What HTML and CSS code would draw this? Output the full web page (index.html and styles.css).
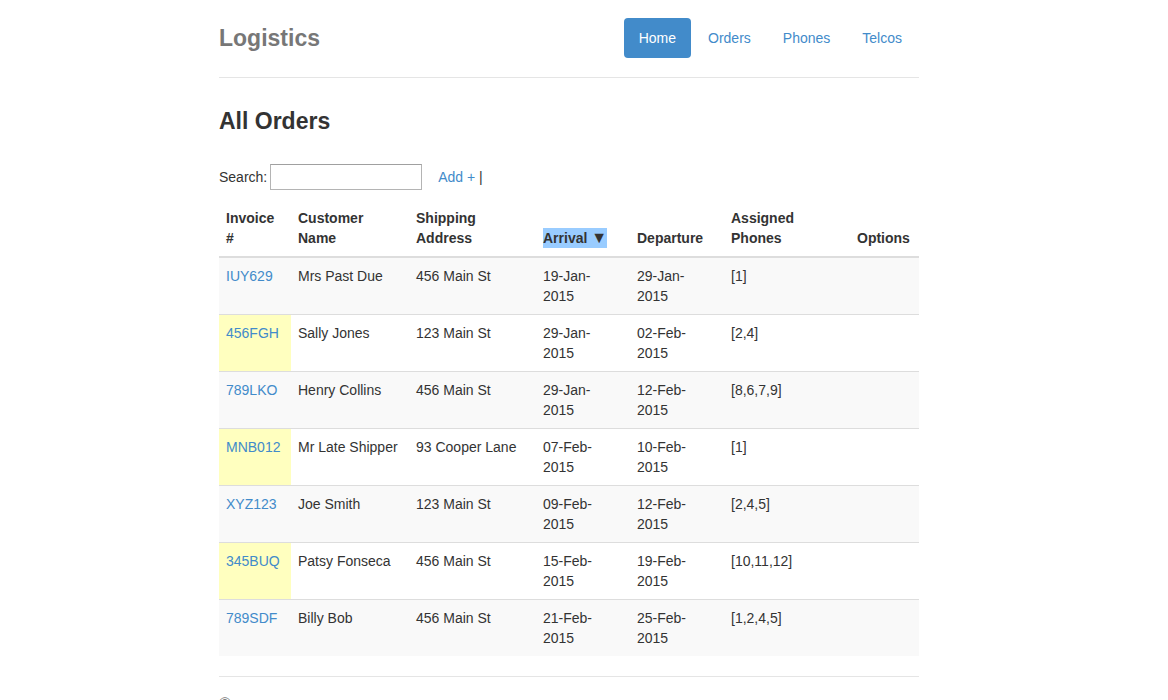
FILE: index.html
```html
<!DOCTYPE html>
<html lang="en">
<head>
<meta charset="utf-8">
<title>Logistics</title>
<link rel="stylesheet" href="styles.css">
</head>
<body>
<div class="container">
  <header class="header">
    <h3 class="brand">Logistics</h3>
    <nav class="nav">
      <a class="nav-link active" href="#">Home</a>
      <a class="nav-link" href="#">Orders</a>
      <a class="nav-link" href="#">Phones</a>
      <a class="nav-link" href="#">Telcos</a>
    </nav>
  </header>
  <main>
    <h1 class="title">All Orders</h1>
    <div class="toolbar">
      <label for="search">Search:</label>
      <input class="search" id="search" type="text">
      <span class="actions"><a href="#">Add +</a> |</span>
    </div>
    <table class="table">
      <colgroup>
        <col class="col-invoice"><col class="col-customer"><col class="col-address"><col class="col-date"><col class="col-date"><col class="col-phones"><col class="col-options">
      </colgroup>
      <thead>
        <tr><th>Invoice #</th><th>Customer<br>Name</th><th>Shipping<br>Address</th><th><span class="sorted">Arrival <span class="arrow">▼</span></span></th><th>Departure</th><th>Assigned<br>Phones</th><th>Options</th></tr>
      </thead>
      <tbody>
        <tr><td><a href="#">IUY629</a></td><td>Mrs Past Due</td><td>456 Main St</td><td>19-Jan-<br>2015</td><td>29-Jan-<br>2015</td><td>[1]</td><td></td></tr>
        <tr><td class="late"><a href="#">456FGH</a></td><td>Sally Jones</td><td>123 Main St</td><td>29-Jan-<br>2015</td><td>02-Feb-<br>2015</td><td>[2,4]</td><td></td></tr>
        <tr><td><a href="#">789LKO</a></td><td>Henry Collins</td><td>456 Main St</td><td>29-Jan-<br>2015</td><td>12-Feb-<br>2015</td><td>[8,6,7,9]</td><td></td></tr>
        <tr><td class="late"><a href="#">MNB012</a></td><td>Mr Late Shipper</td><td>93 Cooper Lane</td><td>07-Feb-<br>2015</td><td>10-Feb-<br>2015</td><td>[1]</td><td></td></tr>
        <tr><td><a href="#">XYZ123</a></td><td>Joe Smith</td><td>123 Main St</td><td>09-Feb-<br>2015</td><td>12-Feb-<br>2015</td><td>[2,4,5]</td><td></td></tr>
        <tr><td class="late"><a href="#">345BUQ</a></td><td>Patsy Fonseca</td><td>456 Main St</td><td>15-Feb-<br>2015</td><td>19-Feb-<br>2015</td><td>[10,11,12]</td><td></td></tr>
        <tr><td><a href="#">789SDF</a></td><td>Billy Bob</td><td>456 Main St</td><td>21-Feb-<br>2015</td><td>25-Feb-<br>2015</td><td>[1,2,4,5]</td><td></td></tr>
      </tbody>
    </table>
  </main>
  <footer class="footer">©</footer>
</div>
</body>
</html>
```
FILE: styles.css
```css
* {
  box-sizing: border-box;
}

body {
  margin: 0;
  padding: 18px 30px 0 0;
  background: #fff;
  color: #333;
  font: 14px/20px "Liberation Sans", Arial, sans-serif;
}

a {
  color: #428bca;
  text-decoration: none;
}

.container {
  max-width: 700px;
  margin: 0 auto;
}

.header {
  display: flex;
  justify-content: space-between;
  align-items: center;
  padding-bottom: 19px;
  border-bottom: 1px solid #e5e5e5;
}

.brand {
  margin: 0;
  color: #777;
  font-size: 23px;
  line-height: 40px;
}

.nav {
  display: flex;
  gap: 2px;
  margin-right: 2px;
}

.nav-link {
  padding: 10px 15px;
  border-radius: 4px;
}

.nav-link.active {
  background: #428bca;
  color: #fff;
}

.title {
  margin: 30px 0;
  font-size: 23px;
  line-height: 26px;
}

.toolbar {
  display: flex;
  align-items: center;
  margin-bottom: 10px;
}

.search {
  width: 152px;
  height: 26px;
  margin: 0 16px 0 3px;
  padding: 0 4px;
  border: 1px solid #b4b4b4;
  border-top-color: #a0a0a0;
  background: #fff;
  font: inherit;
}

.table {
  width: 100%;
  table-layout: fixed;
  border-collapse: separate;
  border-spacing: 0;
}

.col-invoice { width: 72px; }
.col-customer { width: 118px; }
.col-address { width: 127px; }
.col-date { width: 94px; }
.col-phones { width: 126px; }

.table th {
  padding: 8px 7px;
  border-bottom: 2px solid #ddd;
  text-align: left;
  vertical-align: bottom;
}

.table td {
  padding: 8px 7px;
  border-bottom: 1px solid #ddd;
  vertical-align: top;
}

.table tr:last-child td {
  border-bottom: 0;
}

.table tbody tr:nth-child(odd) {
  background: #f9f9f9;
}

.table td.late {
  background: #ffffbf;
}

.sorted {
  display: inline-block;
  background: #9cf;
}

.arrow {
  font-size: 16px;
  line-height: 1;
}

.footer {
  margin-top: 20px;
  padding-top: 17px;
  border-top: 1px solid #e5e5e5;
  color: #777;
  font-size: 16px;
}
```
